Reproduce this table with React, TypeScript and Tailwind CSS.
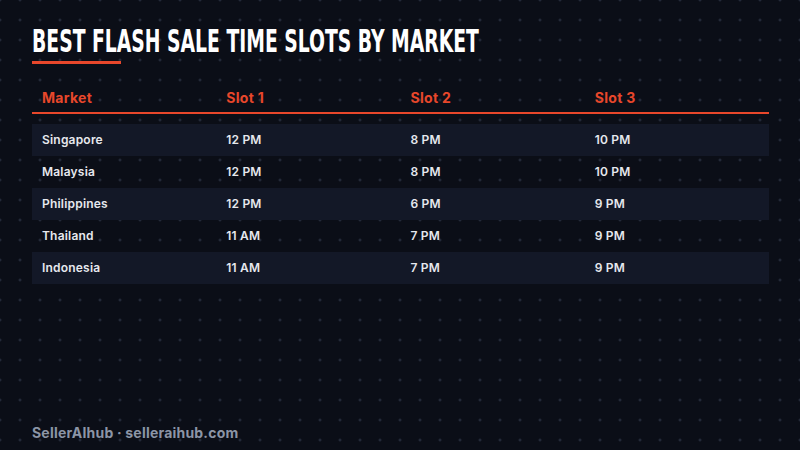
import React from 'react';

const ROWS = [
  { market: 'Singapore', s1: '12 PM', s2: '8 PM', s3: '10 PM' },
  { market: 'Malaysia', s1: '12 PM', s2: '8 PM', s3: '10 PM' },
  { market: 'Philippines', s1: '12 PM', s2: '6 PM', s3: '9 PM' },
  { market: 'Thailand', s1: '11 AM', s2: '7 PM', s3: '9 PM' },
  { market: 'Indonesia', s1: '11 AM', s2: '7 PM', s3: '9 PM' },
];

const HEADERS = ['Market', 'Slot 1', 'Slot 2', 'Slot 3'];

// plus-mark grid behind everything
const DotGrid: React.FC = () => (
  <svg className="absolute inset-0 h-full w-full" aria-hidden>
    <defs>
      <pattern id="plus" width="20" height="20" patternUnits="userSpaceOnUse" x="-2" y="-2">
        <rect x="1.5" y="0.5" width="1" height="3" fill="#2a3142" />
        <rect x="0.5" y="1.5" width="3" height="1" fill="#2a3142" />
      </pattern>
    </defs>
    <rect width="100%" height="100%" fill="url(#plus)" />
  </svg>
);

export default function App() {
  return (
    <div className="relative h-[450px] w-[800px] overflow-hidden bg-[#0b0e17] font-['Inter',sans-serif]">
      <DotGrid />
      <div className="relative flex h-full flex-col px-8 pt-[24px] pb-[7px]">
        <h1 className="origin-left scale-x-[0.652] whitespace-nowrap font-['DejaVu_Sans_Condensed','DejaVu_Sans',sans-serif] text-[32px] font-bold leading-[34px] text-white uppercase [font-stretch:condensed]">
          Best Flash Sale Time Slots by Market
        </h1>
        <div className="mt-[3px] h-[3px] w-[89px] bg-[#e8472b]" />

        <div className="mt-[23px] w-[737px]">
          <div className="grid grid-cols-4 border-b-2 border-[#e8472b] pb-[3px]">
            {HEADERS.map((h) => (
              <div key={h} className="pl-[10px] text-[14px] font-bold leading-[22px] tracking-[0.3px] text-[#e8472b]">
                {h}
              </div>
            ))}
          </div>
          <div className="mt-[10px]">
            {ROWS.map((r, i) => (
              <div
                key={r.market}
                className={`grid h-[32px] grid-cols-4 items-center text-[12px] font-semibold tracking-[0.2px] text-[#e6e8ee] ${
                  i % 2 === 0 ? 'bg-[#131827]' : ''
                }`}
              >
                <div className="pl-[10px]">{r.market}</div>
                <div className="pl-[10px]">{r.s1}</div>
                <div className="pl-[10px]">{r.s2}</div>
                <div className="pl-[10px]">{r.s3}</div>
              </div>
            ))}
          </div>
        </div>

        <div className="mt-auto text-[14px] font-bold tracking-[0.2px] text-[#8c95a6]">SellerAIhub · selleraihub.com</div>
      </div>
    </div>
  );
}
